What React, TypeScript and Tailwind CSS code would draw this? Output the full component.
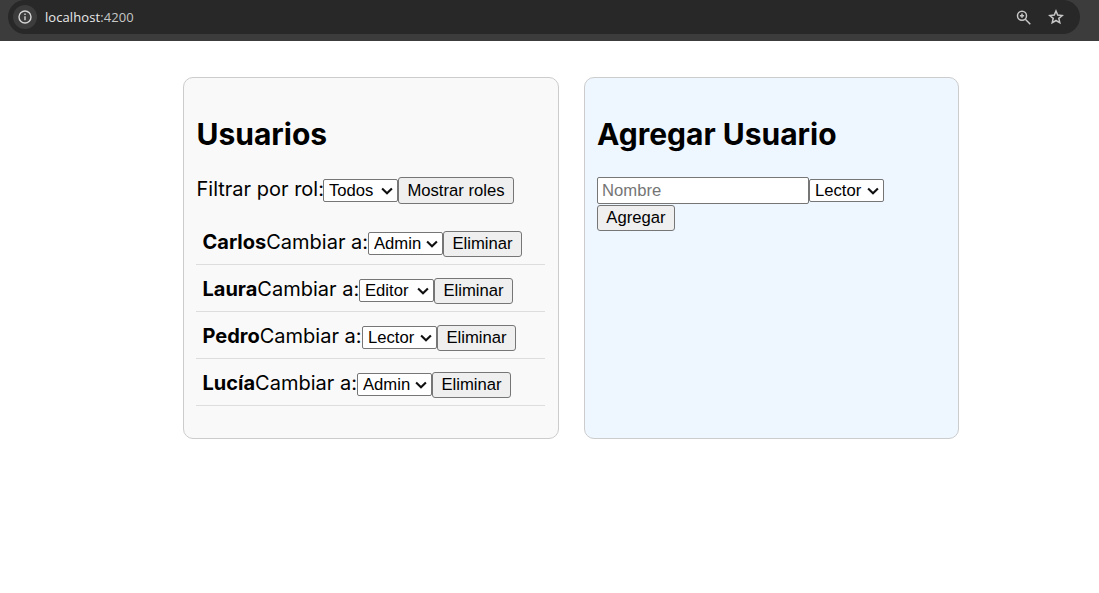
import { useState } from 'react';

const controlText = "font-['Liberation_Sans',Arial,sans-serif] text-[16.67px] leading-[19px] text-black";

function RoleSelect({ value, options, className = '' }: { value: string; options: string[]; className?: string }) {
  const [role, setRole] = useState(value);
  return (
    <span className={`grid h-[23px] w-[75px] shrink-0 grid-cols-1 items-center ${className}`}>
      <select
        value={role}
        onChange={(e) => setRole(e.target.value)}
        className={`${controlText} col-start-1 row-start-1 h-[23px] w-[75px] appearance-none rounded-[2px] border border-[#767676] bg-white pl-[5px]`}
      >
        {options.map((o) => (
          <option key={o}>{o}</option>
        ))}
      </select>
      <svg
        viewBox="0 0 12 8"
        className="pointer-events-none col-start-1 row-start-1 mr-[5px] h-2 w-3 justify-self-end"
        fill="none"
        stroke="#101010"
        strokeWidth="2.1"
      >
        <path d="M1.1 1.5 6 6.3l4.9-4.8" />
      </svg>
    </span>
  );
}

function Button({ children, className }: { children: string; className: string }) {
  return (
    <button
      className={`${controlText} shrink-0 whitespace-nowrap rounded-[3px] border border-[#767676] bg-[#efefef] text-center ${className}`}
    >
      {children}
    </button>
  );
}

const roles = ['Admin', 'Editor', 'Lector'];

const users = [
  { name: 'Carlos', role: 'Admin', label: 'w-[165.5px]' },
  { name: 'Laura', role: 'Editor', label: 'w-[156.5px]' },
  { name: 'Pedro', role: 'Lector', label: 'w-[159.5px]' },
  { name: 'Lucía', role: 'Admin', label: 'w-[154.5px]' },
];

function AddressBar() {
  return (
    <header className="h-[41px] bg-[#3c3c3c] pr-[19px] pl-2">
      <div className="flex h-[34px] items-center rounded-r-[17px] rounded-l-[17px] bg-[#282828] pr-[16px] pl-[5px]">
        <span className="flex size-6 items-center justify-center rounded-full bg-[#3c3c3c]">
          <svg viewBox="0 0 14 14" className="size-3.5" fill="none" stroke="#d6d6d6" strokeWidth="1.4">
            <circle cx="7" cy="7" r="6" />
            <path d="M7 6.2v4M7 3.5v1.5" />
          </svg>
        </span>
        <span className="ml-2 grow font-['Open_Sans','Noto_Sans',sans-serif] text-[13px] leading-[18px] tracking-[0.08px] text-[#c7c7c7]">
          <span className="text-[#e8e8e8]">localhost</span>:4200
        </span>
        <svg viewBox="0 0 15 15" className="mr-[17px] size-[15px]" fill="none" stroke="#c7c7c7" strokeWidth="1.5">
          <circle cx="6" cy="5.7" r="4.5" />
          <path d="m9.3 9.2 5 5M6 3.6v4.2M3.9 5.7h4.2" />
        </svg>
        <svg viewBox="0 0 16 16" className="size-4" fill="none" stroke="#c7c7c7" strokeWidth="1.5">
          <path d="m8 2 1.7 4.1 4.5.4-3.4 2.9 1 4.4L8 11.5l-3.8 2.3 1-4.4-3.4-2.9 4.5-.4z" />
        </svg>
      </div>
    </header>
  );
}

export default function App() {
  return (
    <div className="min-h-[593px] bg-white font-['Inter',sans-serif] text-[20px] leading-6 text-black">
      <AddressBar />
      <main className="mt-9 ml-[183px] flex gap-[25px]">
        <section className="h-[362px] w-[376px] rounded-[10px] border border-[#ccc] bg-[#f9f9f9] px-[12px] pt-[38px]">
          <h2 className="pl-[0.5px] text-[30px] leading-9 font-bold">Usuarios</h2>
          <div className="mt-[25px] flex h-[27px] items-center">
            <label className="-mt-[3px] w-[127px] shrink-0 pl-[0.5px] whitespace-nowrap">Filtrar por rol:</label>
            <RoleSelect value="Todos" options={['Todos', ...roles]} />
            <Button className="h-[27px] w-[116px]">Mostrar roles</Button>
          </div>
          <ul className="mt-[14px] mr-px">
            {users.map((u) => (
              <li key={u.name} className="flex h-[47px] items-center border-b border-[#ddd] pt-[6px] pl-[6.5px]">
                <span className={`-mt-[5px] shrink-0 whitespace-nowrap ${u.label}`}>
                  <strong className="font-bold">{u.name}</strong>Cambiar a:
                </span>
                <RoleSelect value={u.role} options={roles} className="mb-px" />
                <Button className="h-[26px] w-[79px] pb-px">Eliminar</Button>
              </li>
            ))}
          </ul>
        </section>
        <section className="h-[362px] w-[375px] rounded-[10px] border border-[#ccc] bg-[#eef6ff] px-[12px] pt-[38px]">
          <h2 className="text-[30px] leading-9 font-bold">Agregar Usuario</h2>
          <div className="mt-[25px] flex h-[27px] items-center">
            <input
              placeholder="Nombre"
              className={`${controlText} h-[27px] w-[212px] rounded-[2px] border border-[#767676] bg-white px-[4px] placeholder:text-[#757575]`}
            />
            <RoleSelect value="Lector" options={roles} />
          </div>
          <Button className="mt-px block h-[26px] w-[78px] pb-px">Agregar</Button>
        </section>
      </main>
    </div>
  );
}
